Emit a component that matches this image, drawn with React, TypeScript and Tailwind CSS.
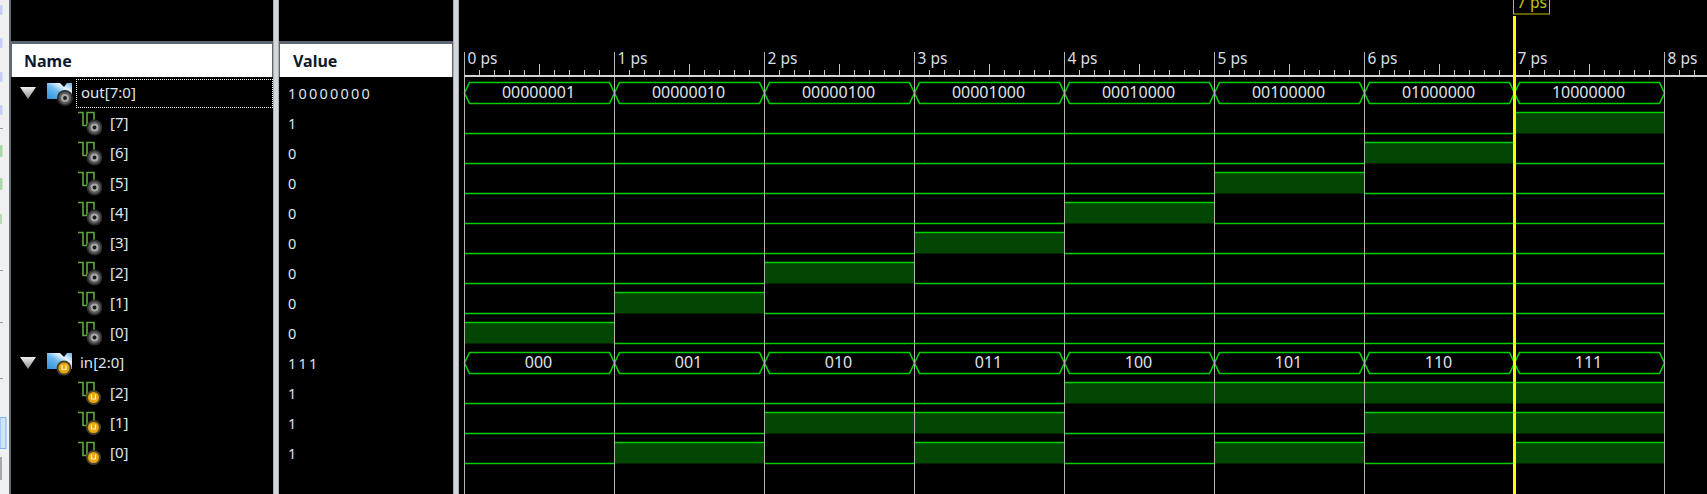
import React from "react";

const GREEN = "#00d000";
const FILL = "#034503";
const GRID = "#b4b4b4";
const FONT = "font-['Noto_Sans','DejaVu_Sans',sans-serif]";

function GearBadge({ cx, cy }: { cx: number; cy: number }) {
  return (
    <g>
      <circle cx={cx} cy={cy} r={8} fill="#2c2c2c" />
      <circle cx={cx} cy={cy} r={6.2} fill="#5c5c5c" />
      <circle cx={cx} cy={cy} r={4} fill="#a8a8a8" />
      <circle cx={cx} cy={cy} r={1.9} fill="#1e1e1e" />
    </g>
  );
}

function InputBadge({ cx, cy }: { cx: number; cy: number }) {
  return (
    <g>
      <circle cx={cx} cy={cy} r={7.5} fill="#4a442c" />
      <circle cx={cx} cy={cy} r={5.5} fill="#e9a60f" />
      <path d={`M${cx - 2} ${cy - 3}V${cy + 1.5}H${cx + 2}V${cy - 3}`} fill="none" stroke="#fff3c0" strokeWidth={1.2} />
    </g>
  );
}

function BusIcon({ input }: { input?: boolean }) {
  return (
    <svg width="26" height="30" viewBox="0 0 26 30" className="shrink-0">
      <defs>
        <linearGradient id={input ? "busI" : "busO"} x1="0" y1="1" x2="1" y2="0">
          <stop offset="0" stopColor="#2f8fdc" />
          <stop offset="0.45" stopColor="#6cb8ee" />
          <stop offset="0.7" stopColor="#e6f3fc" />
          <stop offset="1" stopColor="#5fb0ea" />
        </linearGradient>
      </defs>
      <path d="M0 5H13L17 9L20 5H25V21H0Z" fill={`url(#${input ? "busI" : "busO"})`} />
      {input ? <InputBadge cx={17} cy={20} /> : <GearBadge cx={18} cy={20} />}
    </svg>
  );
}

function PulseIcon({ input }: { input?: boolean }) {
  return (
    <svg width="26" height="30" viewBox="0 0 26 30" className="shrink-0">
      <path d="M2 4.5H7V17.5H11V4.5H18V15" fill="none" stroke="#5fa83f" strokeWidth={1.6} />
      {input ? <InputBadge cx={17.5} cy={19.5} /> : <GearBadge cx={18.5} cy={19.5} />}
    </svg>
  );
}

function Triangle() {
  return (
    <svg width="16" height="12" viewBox="0 0 16 12" className="shrink-0">
      <defs>
        <linearGradient id="tri" x1="0" y1="0" x2="0" y2="1">
          <stop offset="0" stopColor="#f0f0f0" />
          <stop offset="1" stopColor="#8c8c8c" />
        </linearGradient>
      </defs>
      <path d="M0 0H16L8 12Z" fill="url(#tri)" />
    </svg>
  );
}

type Row =
  | { kind: "bus"; label: string; value: string; input?: boolean; focus?: boolean }
  | { kind: "bit"; label: string; value: string; input?: boolean };

const rows: Row[] = [
  { kind: "bus", label: "out[7:0]", value: "10000000", focus: true },
  { kind: "bit", label: "[7]", value: "1" },
  { kind: "bit", label: "[6]", value: "0" },
  { kind: "bit", label: "[5]", value: "0" },
  { kind: "bit", label: "[4]", value: "0" },
  { kind: "bit", label: "[3]", value: "0" },
  { kind: "bit", label: "[2]", value: "0" },
  { kind: "bit", label: "[1]", value: "0" },
  { kind: "bit", label: "[0]", value: "0" },
  { kind: "bus", label: "in[2:0]", value: "111", input: true },
  { kind: "bit", label: "[2]", value: "1", input: true },
  { kind: "bit", label: "[1]", value: "1", input: true },
  { kind: "bit", label: "[0]", value: "1", input: true },
];

function NameRow({ row }: { row: Row }) {
  if (row.kind === "bus") {
    return (
      <div className="h-[30px] flex items-center pl-[9px]">
        <Triangle />
        <div className="ml-[11px]">
          <BusIcon input={row.input} />
        </div>
        <div
          className={
            row.focus
              ? "ml-[3px] h-[29px] flex-1 flex items-center pl-[4px] pb-[2px] border border-dotted border-white"
              : "ml-[3px] h-[29px] flex-1 flex items-center pl-[3px] pb-[2px] border border-transparent"
          }
        >
          <span className="text-[15px] text-[#dfe6ee] leading-none">{row.label}</span>
        </div>
      </div>
    );
  }
  return (
    <div className="h-[30px] flex items-center pl-[65px]">
      <PulseIcon input={row.input} />
      <span className="ml-[8px] pb-[2px] text-[15px] text-[#dfe6ee] leading-none">{row.label}</span>
    </div>
  );
}

function HeaderCell({ title, pad }: { title: string; pad: string }) {
  return (
    <div className="h-[36px] bg-[#5d6670] pt-[3px] px-px">
      <div className={`h-[33px] bg-white flex items-center font-bold text-[16px] text-[#10182a] ${pad}`}>{title}</div>
    </div>
  );
}

function Divider() {
  return <div className="w-[6px] shrink-0 bg-[#d4d7da] border-x border-[#a9aeb3]" />;
}

function LeftStrip() {
  return (
    <div className="w-[11px] shrink-0 bg-[#f0f0f0] border-r-2 border-[#656d75]">
      <svg width="9" height="494" viewBox="0 0 9 494" className="block">
        {[5, 38, 72, 105].map((y) => (
          <rect key={y} x="0" y={y} width="2.5" height="10" rx="1" fill="#c5cdf7" />
        ))}
        {[145, 178].map((y) => (
          <rect key={y} x="0" y={y} width="2.5" height="12" rx="1" fill="#a9d6a6" />
        ))}
        <rect x="0" y="214" width="2" height="10" fill="#b9d6b6" />
        {[128, 270, 322, 378].map((y) => (
          <rect key={y} x="0" y={y} width="3" height="1" fill="#9a9a9a" />
        ))}
        <rect x="0" y="417.5" width="6" height="31" fill="#cfe4f7" stroke="#7db4ee" />
        <rect x="0" y="457" width="2" height="23" fill="#a9a9a9" />
      </svg>
    </div>
  );
}

const segs = [0, 1, 2, 3, 4, 5, 6, 7];
const X = (i: number) => 464.5 + 150 * i;

function BusWave({ cy, values }: { cy: number; values: string[] }) {
  return (
    <g>
      {values.map((v, i) => {
        const x = X(i);
        const pts = `${x},${cy} ${x + 5},${cy - 10.5} ${x + 145},${cy - 10.5} ${x + 150},${cy} ${x + 145},${cy + 10.5} ${x + 5},${cy + 10.5}`;
        return (
          <g key={i}>
            <polygon points={pts} fill="none" stroke={GREEN} strokeWidth={1.6} />
            <text x={x + 74} y={cy + 5} textAnchor="middle" fontSize={16} fill="#dde4ec">
              {v}
            </text>
          </g>
        );
      })}
    </g>
  );
}

function BitWave({ cy, bits }: { cy: number; bits: number[] }) {
  return (
    <g>
      {bits.map((b, i) => {
        const x = X(i);
        return b ? (
          <g key={i}>
            <rect x={x} y={cy - 10.5} width={150} height={21} fill={FILL} />
            <line x1={x} x2={x + 150} y1={cy - 10.5} y2={cy - 10.5} stroke={GREEN} strokeWidth={1.6} />
          </g>
        ) : (
          <line key={i} x1={x} x2={x + 150} y1={cy + 10.5} y2={cy + 10.5} stroke={GREEN} strokeWidth={1.6} />
        );
      })}
    </g>
  );
}

function Waves() {
  const outVals = ["00000001", "00000010", "00000100", "00001000", "00010000", "00100000", "01000000", "10000000"];
  const inVals = ["000", "001", "010", "011", "100", "101", "110", "111"];
  const ticks: number[] = [];
  for (let x = 464; x < 1707; x += 15) ticks.push(x);
  return (
    <svg width="1248" height="494" viewBox="459 0 1248 494" className="block">
      {[7, 6, 5, 4, 3, 2, 1, 0].map((k, idx) => (
        <BitWave key={k} cy={123 + idx * 30} bits={segs.map((s) => (s === k ? 1 : 0))} />
      ))}
      <BusWave cy={93} values={outVals} />
      <BusWave cy={363} values={inVals} />
      {[2, 1, 0].map((k, idx) => (
        <BitWave key={k} cy={393 + idx * 30} bits={segs.map((s) => (s >> k) & 1)} />
      ))}
      {[0, 1, 2, 3, 4, 5, 6, 7, 8].map((i) => (
        <g key={i}>
          <line x1={X(i)} x2={X(i)} y1={52} y2={494} stroke={GRID} />
          <text x={X(i) + 3} y={64} fontSize={15.5} fill="#d8dfe6">
            {i} ps
          </text>
        </g>
      ))}
      {ticks.map((x) => {
        const n = (x - 464) / 15;
        if (n % 10 === 0) return null;
        return <line key={x} x1={x + 0.5} x2={x + 0.5} y1={n % 5 === 0 ? 64 : 70} y2={76} stroke="#c8c8c8" />;
      })}
      <rect x={464} y={75} width={1243} height={2} fill="#d2d2d2" />
      <rect x={1513} y={16} width={3} height={478} fill="#ffff00" />
      <rect x={1513.5} y={-6} width={36} height={20} fill="#000" stroke="#c4c400" />
      <text x={1517} y={8} fontSize={15.5} fill="#c4c400">
        7 ps
      </text>
    </svg>
  );
}

export default function App() {
  return (
    <div className={`w-[1707px] h-[494px] bg-black flex overflow-hidden ${FONT}`}>
      <LeftStrip />
      <div className="w-[262px] shrink-0 flex flex-col">
        <div className="h-[41px] shrink-0" />
        <HeaderCell title="Name" pad="pl-[12px]" />
        <div className="h-px shrink-0" />
        {rows.map((r, i) => (
          <NameRow key={i} row={r} />
        ))}
      </div>
      <Divider />
      <div className="w-[174px] shrink-0 flex flex-col">
        <div className="h-[41px] shrink-0" />
        <HeaderCell title="Value" pad="pl-[13px]" />
        <div className="h-px shrink-0" />
        {rows.map((r, i) => (
          <div key={i} className="h-[30px] flex items-center pl-[9px] text-[14.5px] tracking-[2.2px] text-[#dfe6ee] leading-none">
            {r.value}
          </div>
        ))}
      </div>
      <Divider />
      <div className="flex-1 min-w-0">
        <Waves />
      </div>
    </div>
  );
}
